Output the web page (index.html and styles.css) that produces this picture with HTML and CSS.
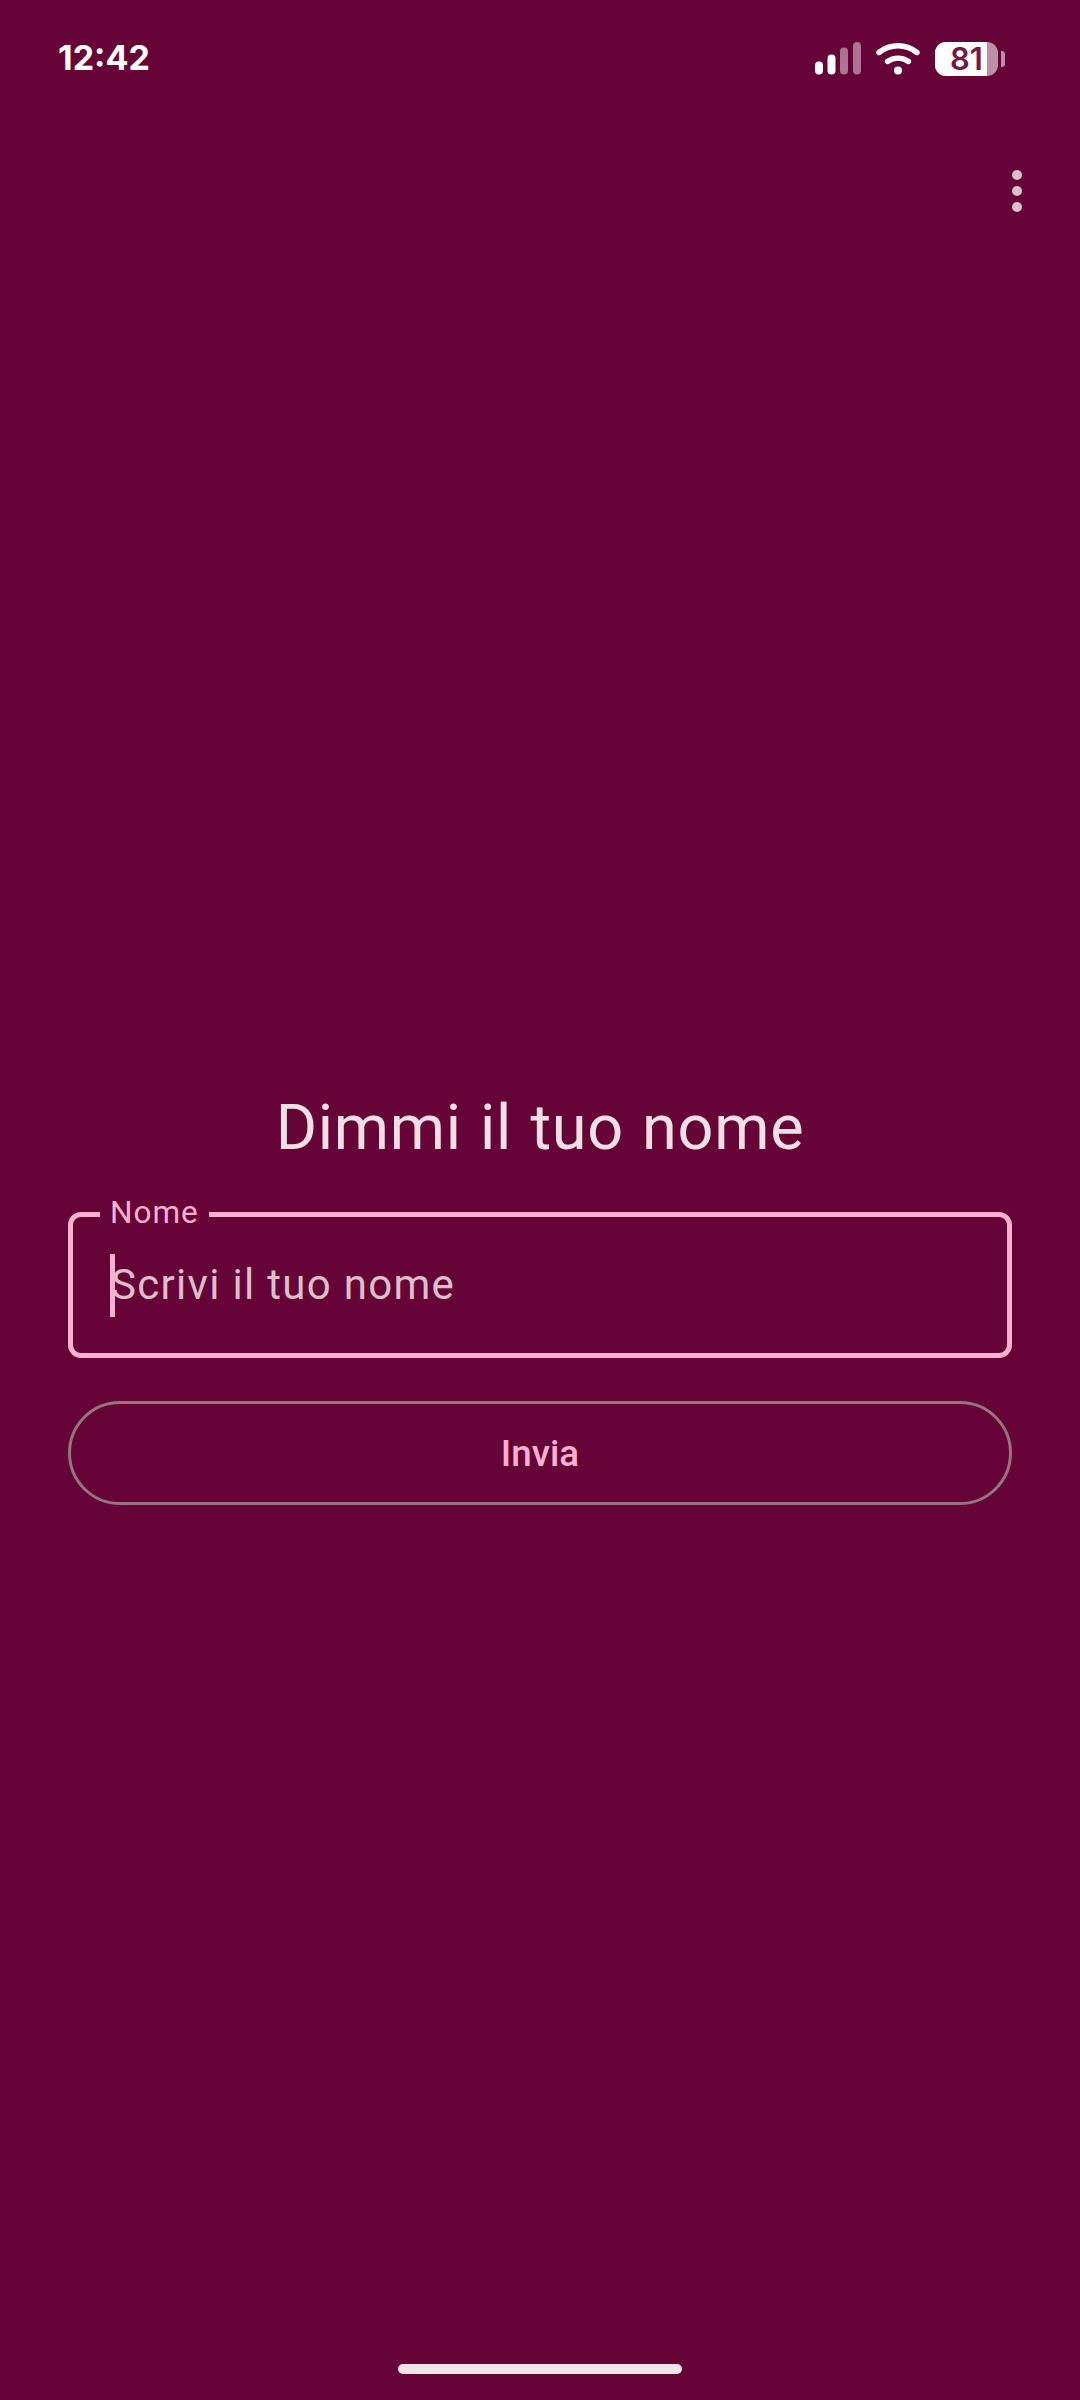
FILE: index.html
```html
<!DOCTYPE html>
<html lang="it">
<head>
  <meta charset="UTF-8" />
  <meta name="viewport" content="width=device-width, initial-scale=1.0"/>
  <title>Dimmi il tuo nome</title>
  <link rel="stylesheet" href="styles.css">
</head>
<body>
<div class="screen">
  <div class="status-bar">
    <span class="clock">12:42</span>
    <div class="status-icons">
      <svg class="signal" width="46" height="33" viewBox="0 0 46 33">
        <rect x="0" y="19.5" width="8" height="13" rx="4" fill="#fff"/>
        <rect x="12.5" y="12.5" width="8" height="20" rx="4" fill="#fff"/>
        <rect x="25" y="5.5" width="8" height="27" rx="4" fill="#fff" fill-opacity="0.45"/>
        <rect x="38" y="0" width="8" height="32.5" rx="4" fill="#fff" fill-opacity="0.45"/>
      </svg>
      <svg class="wifi" width="44" height="33" viewBox="0 0 44 33">
        <path d="M3 10.5C14.5 1.5 29.5 1.5 41 10.5" fill="none" stroke="#fff" stroke-width="5.4" stroke-linecap="round"/>
        <path d="M11.5 19.5C17.5 15 26.5 15 32.5 19.5" fill="none" stroke="#fff" stroke-width="5.4" stroke-linecap="round"/>
        <circle cx="22" cy="28.5" r="4" fill="#fff"/>
      </svg>
      <div class="battery">
        <div class="battery-body">
          <div class="battery-fill"></div>
          <span class="battery-level">81</span>
        </div>
        <div class="battery-nub"></div>
      </div>
    </div>
  </div>

  <div class="toolbar">
    <div class="menu-btn">
      <span class="dot"></span>
      <span class="dot"></span>
      <span class="dot"></span>
    </div>
  </div>

  <div class="content">
    <h1>Dimmi il tuo nome</h1>
    <div class="field">
      <span class="field-label">Nome</span>
      <span class="caret"></span>
      <span class="placeholder">Scrivi il tuo nome</span>
    </div>
    <button class="send-btn">Invia</button>
  </div>

  <div class="home-indicator"></div>
</div>
</body>
</html>
```

FILE: styles.css
```css
* { box-sizing: border-box; }
body {
  margin: 0;
  font-family: Roboto, sans-serif;
  background: #660337;
}
.screen {
  width: 1080px;
  height: 2400px;
  display: flex;
  flex-direction: column;
  background: #660337;
}
.status-bar {
  height: 110px;
  padding: 42px 75px 0 58px;
  display: flex;
  justify-content: space-between;
  align-items: flex-start;
}
.clock {
  font-family: Inter, sans-serif;
  font-weight: 700;
  font-size: 34px;
  line-height: 32px;
  color: #fff;
}
.status-icons {
  display: flex;
  align-items: flex-start;
  gap: 15px;
}
.battery {
  display: flex;
  align-items: center;
  gap: 3px;
}
.battery-body {
  position: relative;
  width: 63px;
  height: 34px;
  border-radius: 11px;
  background: #bb90a8;
}
.battery-fill {
  width: 52px;
  height: 100%;
  border-radius: 11px 0 0 11px;
  background: #fff;
}
.battery-level {
  position: absolute;
  left: 0;
  top: -2px;
  width: 63px;
  text-align: center;
  font-family: Inter, sans-serif;
  font-weight: 600;
  font-size: 31px;
  line-height: 38px;
  color: #6f1a47;
}
.battery-nub {
  width: 4px;
  height: 16px;
  border-radius: 0 3px 3px 0;
  background: #bb90a8;
}
.toolbar {
  height: 120px;
  padding: 60px 58px 0 0;
  display: flex;
  justify-content: flex-end;
  align-items: flex-start;
}
.menu-btn {
  display: flex;
  flex-direction: column;
  gap: 6px;
}
.dot {
  width: 10px;
  height: 10px;
  border-radius: 50%;
  background: #dcbfca;
}
.content {
  padding: 856px 68px 0;
}
h1 {
  margin: 0;
  font-weight: 400;
  font-size: 63px;
  line-height: 84px;
  letter-spacing: 0.7px;
  word-spacing: 2px;
  text-align: center;
  color: #f0e0e6;
}
.field {
  position: relative;
  height: 146px;
  margin-top: 42px;
  padding-left: 38px;
  display: flex;
  align-items: center;
  border: 5px solid #ffb0ce;
  border-radius: 13px;
}
.field-label {
  position: absolute;
  left: 27px;
  top: -22px;
  padding: 0 10px;
  background: #660337;
  font-size: 31.5px;
  line-height: 36px;
  letter-spacing: 1px;
  color: #ffb0ce;
}
.caret {
  position: absolute;
  left: 37px;
  top: 37px;
  width: 5px;
  height: 63px;
  background: #ffb0ce;
}
.placeholder {
  font-size: 42px;
  line-height: 58px;
  letter-spacing: 1.3px;
  color: #dcbfc8;
}
.send-btn {
  display: block;
  width: 100%;
  height: 104px;
  margin-top: 43px;
  border: 3px solid #94747f;
  border-radius: 52px;
  background: transparent;
  font-family: Roboto, sans-serif;
  font-weight: 500;
  font-size: 36.75px;
  color: #ffb0ce;
}
.home-indicator {
  width: 284px;
  height: 10px;
  margin: auto auto 26px;
  border-radius: 5px;
  background: #f3e4e9;
}
```
